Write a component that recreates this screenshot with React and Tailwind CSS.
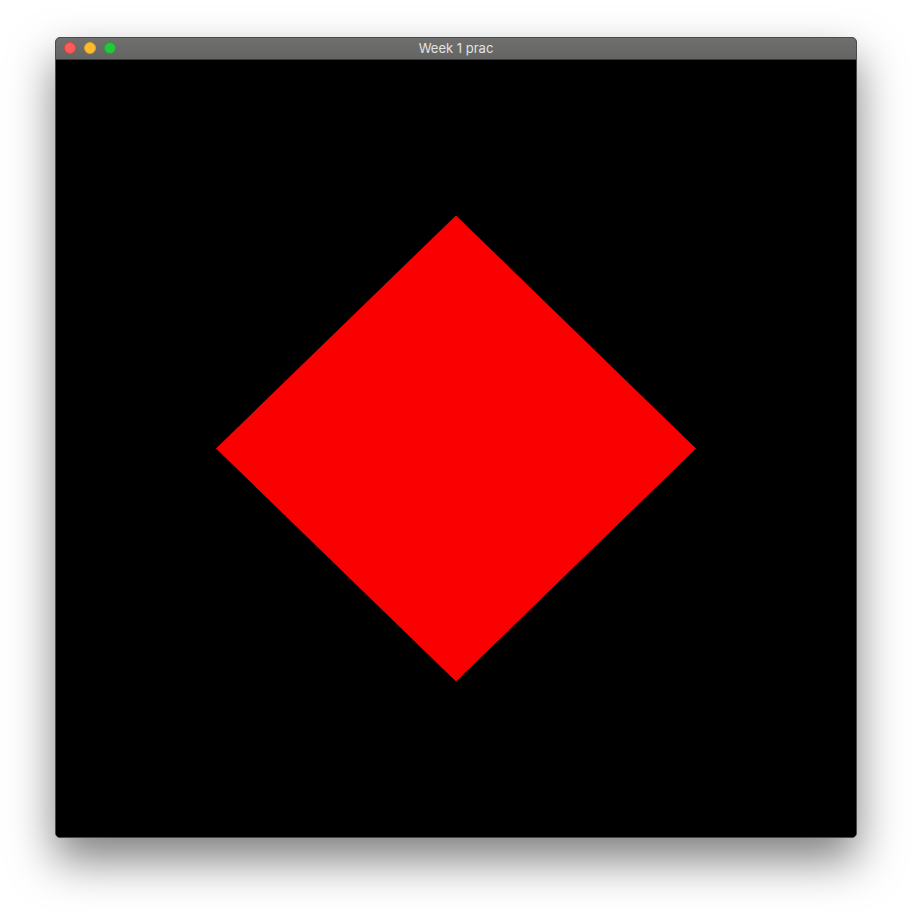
import React from "react";

const TrafficLights = () => (
  <div className="absolute left-[8px] top-[4px] flex items-center gap-[8px]">
    <span className="block h-[12px] w-[12px] rounded-full bg-[#fd5d56] border border-[#e0443e]" />
    <span className="block h-[12px] w-[12px] rounded-full bg-[#febb2d] border border-[#dea123]" />
    <span className="block h-[12px] w-[12px] rounded-full bg-[#27c63f] border border-[#1aab29]" />
  </div>
);

const Diamond = () => (
  <svg className="block h-full w-full" viewBox="-1 -1 2 2" preserveAspectRatio="none">
    <polygon points="0,-0.6 0.6,0 0,0.6 -0.6,0" fill="#fb0000" />
  </svg>
);

export default function App() {
  return (
    <div className="h-[912px] w-[912px] bg-white pl-[55px] pt-[37px]" style={{ fontFamily: "Inter, 'Noto Sans', sans-serif" }}>
      <div className="w-[802px] overflow-hidden rounded-[5px] border border-[#4a4a4a] bg-black shadow-[0_22px_45px_rgba(0,0,0,0.5)]">
        <div className="relative flex h-[22px] items-center justify-center bg-gradient-to-b from-[#6f6f6d] to-[#646462] border-b border-[#3a3a3a]">
          <TrafficLights />
          <span className="text-[13px] leading-none text-[#e2e2e2]">Week 1 prac</span>
        </div>
        <div className="h-[777px] w-[800px] bg-black">
          <Diamond />
        </div>
      </div>
    </div>
  );
}
